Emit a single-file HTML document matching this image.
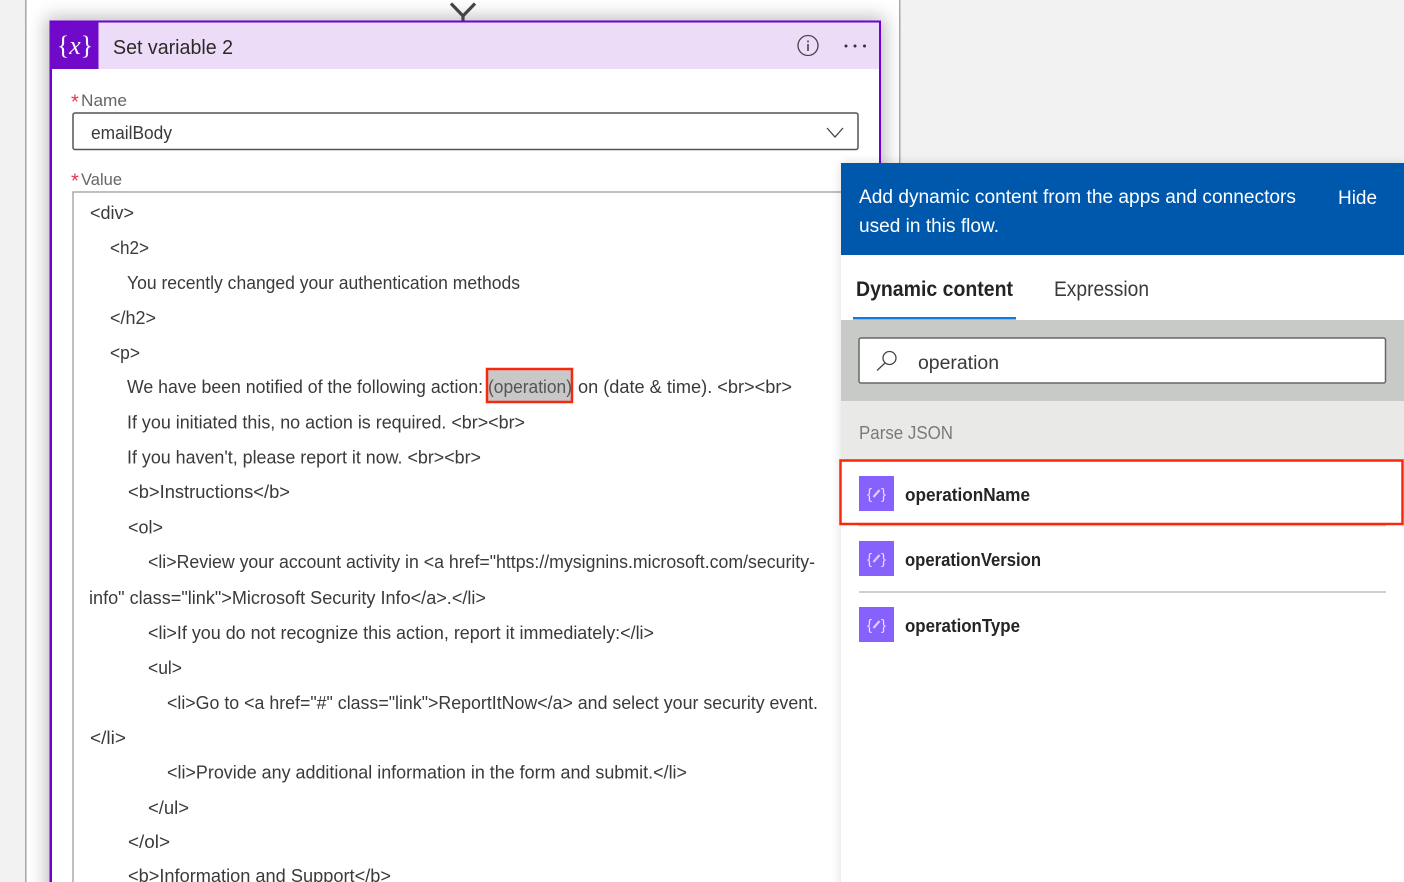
<!DOCTYPE html>
<html><head><meta charset="utf-8">
<style>
html,body{margin:0;padding:0;width:1404px;height:882px;overflow:hidden;background:#fff}
svg{display:block;filter:blur(.3px)}
text{font-family:"Liberation Sans",sans-serif;font-size:18px;fill:#3b3a39;white-space:pre}
</style></head>
<body>
<svg width="1404" height="882" viewBox="0 0 1404 882" xmlns="http://www.w3.org/2000/svg">
<defs>
<filter id="s" filterUnits="userSpaceOnUse" x="-50" y="-50" width="1500" height="1000"><feGaussianBlur stdDeviation="9"/></filter>
<filter id="p" filterUnits="userSpaceOnUse" x="780" y="100" width="700" height="850"><feGaussianBlur stdDeviation="5"/></filter>
</defs>
<rect width="1404" height="882" fill="#f2f2f2"/>
<rect x="27" y="0" width="872" height="882" fill="#fff"/>
<rect x="25" y="0" width="1.5" height="882" fill="#a9a9a9"/>
<rect x="899" y="0" width="1.5" height="882" fill="#a9a9a9"/>
<rect x="46" y="17" width="839" height="880" fill="#000" opacity=".26" filter="url(#s)"/>
<rect x="49.500" y="20.500" width="831.500" height="880" fill="#7100d6"/>
<rect x="52" y="22.500" width="827" height="880" fill="#fff"/>
<rect x="52" y="22.500" width="827" height="46.500" fill="#ecdcf8"/>
<rect x="50" y="22.500" width="48.500" height="46.500" fill="#7109c9"/>
<path d="M451 3.500 L463 16 L475 3.500 M463 16 V20.500" fill="none" stroke="#444" stroke-width="3.200"/>
<text x="57" y="54" textLength="36" lengthAdjust="spacingAndGlyphs" style="font-family:'Liberation Serif',serif;font-size:26px;fill:#fff"><tspan>{</tspan><tspan font-style="italic">x</tspan><tspan>}</tspan></text>
<text x="113" y="54" textLength="120" lengthAdjust="spacingAndGlyphs" style="font-size:20px;fill:#2b2a29">Set variable 2</text>
<circle cx="808" cy="45.500" r="10" fill="none" stroke="#444" stroke-width="1.300"/>
<rect x="807.200" y="44" width="1.600" height="7" fill="#444"/><rect x="807.200" y="40.500" width="1.600" height="1.800" fill="#444"/>
<circle cx="846" cy="46" r="1.500" fill="#333"/><circle cx="855" cy="46" r="1.500" fill="#333"/><circle cx="864.500" cy="46" r="1.500" fill="#333"/>

<text x="71" y="108.500" style="font-size:20px;fill:#e8314a">*</text>
<text x="81" y="106" textLength="46" lengthAdjust="spacingAndGlyphs" style="font-size:17px;fill:#666">Name</text>
<rect x="73" y="113" width="785" height="36.500" rx="2" fill="#fff" stroke="#555" stroke-width="1.500"/>
<text x="91" y="139" textLength="81" lengthAdjust="spacingAndGlyphs">emailBody</text>
<path d="M827 128 L835 137 L843 128" fill="none" stroke="#444" stroke-width="1.300"/>

<text x="71" y="187.500" style="font-size:20px;fill:#e8314a">*</text>
<text x="81" y="185" textLength="41" lengthAdjust="spacingAndGlyphs" style="font-size:17px;fill:#666">Value</text>
<path d="M73 882 V192 H842" fill="none" stroke="#aaa" stroke-width="1.500"/>

<text x="90" y="219" textLength="44" lengthAdjust="spacingAndGlyphs">&lt;div&gt;</text>
<text x="110" y="254" textLength="39" lengthAdjust="spacingAndGlyphs">&lt;h2&gt;</text>
<text x="127" y="289" textLength="393" lengthAdjust="spacingAndGlyphs">You recently changed your authentication methods</text>
<text x="110" y="324" textLength="46" lengthAdjust="spacingAndGlyphs">&lt;/h2&gt;</text>
<text x="110" y="359" textLength="30" lengthAdjust="spacingAndGlyphs">&lt;p&gt;</text>
<text x="127" y="393" textLength="356" lengthAdjust="spacingAndGlyphs">We have been notified of the following action:</text>
<rect x="487" y="369" width="85" height="33" fill="#c8c8c8" stroke="#f52a0c" stroke-width="2.500"/>
<text x="488" y="393" textLength="84" lengthAdjust="spacingAndGlyphs" style="fill:#555">(operation)</text>
<text x="578" y="393" textLength="214" lengthAdjust="spacingAndGlyphs">on (date &amp; time). &lt;br&gt;&lt;br&gt;</text>
<text x="127" y="428.500" textLength="398" lengthAdjust="spacingAndGlyphs">If you initiated this, no action is required. &lt;br&gt;&lt;br&gt;</text>
<text x="127" y="463.500" textLength="354" lengthAdjust="spacingAndGlyphs">If you haven't, please report it now. &lt;br&gt;&lt;br&gt;</text>
<text x="128" y="498" textLength="162" lengthAdjust="spacingAndGlyphs">&lt;b&gt;Instructions&lt;/b&gt;</text>
<text x="128" y="533.500" textLength="35" lengthAdjust="spacingAndGlyphs">&lt;ol&gt;</text>
<text x="148" y="568" textLength="667" lengthAdjust="spacingAndGlyphs">&lt;li&gt;Review your account activity in &lt;a href="https://mysignins.microsoft.com/security-</text>
<text x="89" y="604" textLength="397" lengthAdjust="spacingAndGlyphs">info" class="link"&gt;Microsoft Security Info&lt;/a&gt;.&lt;/li&gt;</text>
<text x="148" y="639" textLength="506" lengthAdjust="spacingAndGlyphs">&lt;li&gt;If you do not recognize this action, report it immediately:&lt;/li&gt;</text>
<text x="148" y="674" textLength="34" lengthAdjust="spacingAndGlyphs">&lt;ul&gt;</text>
<text x="167" y="709" textLength="651" lengthAdjust="spacingAndGlyphs">&lt;li&gt;Go to &lt;a href="#" class="link"&gt;ReportItNow&lt;/a&gt; and select your security event.</text>
<text x="90" y="744" textLength="36" lengthAdjust="spacingAndGlyphs">&lt;/li&gt;</text>
<text x="167" y="778.500" textLength="520" lengthAdjust="spacingAndGlyphs">&lt;li&gt;Provide any additional information in the form and submit.&lt;/li&gt;</text>
<text x="148" y="814" textLength="41" lengthAdjust="spacingAndGlyphs">&lt;/ul&gt;</text>
<text x="128" y="848" textLength="42" lengthAdjust="spacingAndGlyphs">&lt;/ol&gt;</text>
<text x="128" y="882" textLength="263" lengthAdjust="spacingAndGlyphs">&lt;b&gt;Information and Support&lt;/b&gt;</text>

<rect x="841" y="163" width="563" height="740" fill="#000" opacity=".14" filter="url(#p)"/>
<rect x="841" y="163" width="563" height="719" fill="#fff"/>
<rect x="841" y="163" width="563" height="92" fill="#0058ad"/>
<text x="859" y="203" textLength="437" lengthAdjust="spacingAndGlyphs" style="font-size:19px;fill:#fff">Add dynamic content from the apps and connectors</text>
<text x="859" y="232" textLength="140" lengthAdjust="spacingAndGlyphs" style="font-size:19px;fill:#fff">used in this flow.</text>
<text x="1338" y="204" textLength="39" lengthAdjust="spacingAndGlyphs" style="font-size:19px;fill:#fff">Hide</text>

<text x="856" y="296" textLength="157" lengthAdjust="spacingAndGlyphs" style="font-size:21px;font-weight:bold;fill:#252423">Dynamic content</text>
<text x="1054" y="296" textLength="95" lengthAdjust="spacingAndGlyphs" style="font-size:21px;fill:#3b3a39">Expression</text>
<rect x="853" y="317" width="163" height="2.500" fill="#0f7ae0"/>
<rect x="841" y="320" width="563" height="81" fill="#c8cac8"/>
<rect x="859" y="338" width="526.500" height="45" rx="2" fill="#fff" stroke="#666" stroke-width="1.500"/>
<circle cx="889.500" cy="358" r="6.500" fill="none" stroke="#444" stroke-width="1.300"/>
<path d="M885 363 L877 370.500" stroke="#444" stroke-width="1.300" fill="none"/>
<text x="918" y="369" textLength="81" lengthAdjust="spacingAndGlyphs" style="font-size:19px">operation</text>
<rect x="841" y="401" width="563" height="59" fill="#e9eae8"/>
<text x="859" y="439" textLength="94" lengthAdjust="spacingAndGlyphs" style="fill:#7a7a7a">Parse JSON</text>

<rect x="859" y="591" width="527" height="2" fill="#d0d0d0"/>
<rect x="859" y="525" width="527" height="1.500" fill="#d8d8d8"/>

<rect x="859" y="476" width="35" height="35" fill="#8661fb"/>
<text x="867" y="499" style="font-size:15px;fill:#e6deff">{</text>
<text x="881" y="499" style="font-size:15px;fill:#e6deff">}</text>
<path d="M873.500 497 L879.500 490" stroke="#d9cdff" stroke-width="2.200" fill="none"/>
<text x="905" y="501" textLength="125" lengthAdjust="spacingAndGlyphs" style="font-weight:bold;fill:#252423">operationName</text>

<rect x="859" y="541" width="35" height="35" fill="#8661fb"/>
<text x="867" y="564" style="font-size:15px;fill:#e6deff">{</text>
<text x="881" y="564" style="font-size:15px;fill:#e6deff">}</text>
<path d="M873.500 562 L879.500 555" stroke="#d9cdff" stroke-width="2.200" fill="none"/>
<text x="905" y="566" textLength="136" lengthAdjust="spacingAndGlyphs" style="font-weight:bold;fill:#252423">operationVersion</text>

<rect x="859" y="607" width="35" height="35" fill="#8661fb"/>
<text x="867" y="630" style="font-size:15px;fill:#e6deff">{</text>
<text x="881" y="630" style="font-size:15px;fill:#e6deff">}</text>
<path d="M873.500 628 L879.500 621" stroke="#d9cdff" stroke-width="2.200" fill="none"/>
<text x="905" y="632" textLength="115" lengthAdjust="spacingAndGlyphs" style="font-weight:bold;fill:#252423">operationType</text>

<rect x="840.500" y="460.500" width="562" height="63.500" fill="none" stroke="#f52a0c" stroke-width="2.500"/>
</svg>
</body></html>
